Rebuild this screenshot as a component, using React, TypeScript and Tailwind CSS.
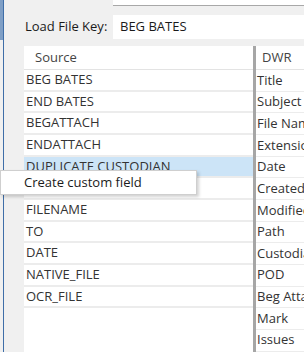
const sources = [
  "BEG BATES",
  "END BATES",
  "BEGATTACH",
  "ENDATTACH",
  "DUPLICATE CUSTODIAN",
  "FROM",
  "FILENAME",
  "TO",
  "DATE",
  "NATIVE_FILE",
  "OCR_FILE",
];

const fields = [
  "Title",
  "Subject",
  "File Name",
  "Extension",
  "Date",
  "Created",
  "Modified",
  "Path",
  "Custodian",
  "POD",
  "Beg Attach",
  "Mark",
  "Issues",
];

export default function App() {
  return (
    <div
      className="relative flex w-[304px] h-[352px] overflow-hidden bg-[#f0f0f0] text-[13px] text-[#333]"
      style={{ fontFamily: '"Open Sans", "Liberation Sans", sans-serif' }}
    >
      {/* left edge */}
      <div className="flex flex-col w-[3px] shrink-0">
        <div className="h-[40px] bg-[#7f9fc6]" />
      </div>
      <div className="w-[1px] shrink-0 bg-[#3f6ea8]" />

      <div className="flex flex-col flex-1 min-w-0">
        <div className="ml-[109px] h-[6px] bg-white border-b border-[#a8a8a8]" />

        <div className="flex items-center h-[24px] mt-[9px]">
          <span className="w-[109px] shrink-0 pl-[21px] text-[#1a1a1a] whitespace-nowrap">Load File Key:</span>
          <div className="flex items-center flex-1 h-[24px] bg-white pl-[7px] text-[#1a1a1a]">BEG BATES</div>
        </div>

        <div className="flex flex-1 mt-[7px] ml-[20px] bg-white">
          <div className="flex flex-col w-[229px] shrink-0">
            <div className="flex items-center h-[24px] pl-[11px] border-b border-[#e3e3e3] text-[#444]">Source</div>
            {sources.map((s, i) => (
              <div
                key={s}
                className={`flex items-center h-[21.67px] pl-[2px] border-b-2 border-[#ececec] whitespace-nowrap ${
                  i === 4 ? "bg-[#cce4f7]" : "bg-white"
                }`}
              >
                {s}
              </div>
            ))}
          </div>
          <div className="w-[3px] shrink-0 bg-[#a6a6a6]" />
          <div className="flex flex-col flex-1 min-w-0 overflow-hidden">
            <div className="flex items-center h-[24px] pl-[6px] border-b border-[#e3e3e3] text-[#444]">DWR</div>
            {fields.map((f) => (
              <div
                key={f}
                className="flex items-center h-[21.67px] pl-[1px] border-b border-[#ececec] whitespace-nowrap"
              >
                {f}
              </div>
            ))}
          </div>
        </div>
      </div>

      {/* context menu */}
      <div className="absolute left-0 top-[170px] flex items-center w-[197px] h-[25px] pl-[23px] bg-white border border-[#cfcfcf] shadow-[2px_2px_3px_rgba(0,0,0,0.18)] text-[#1a1a1a]">
        Create custom field
      </div>
    </div>
  );
}
